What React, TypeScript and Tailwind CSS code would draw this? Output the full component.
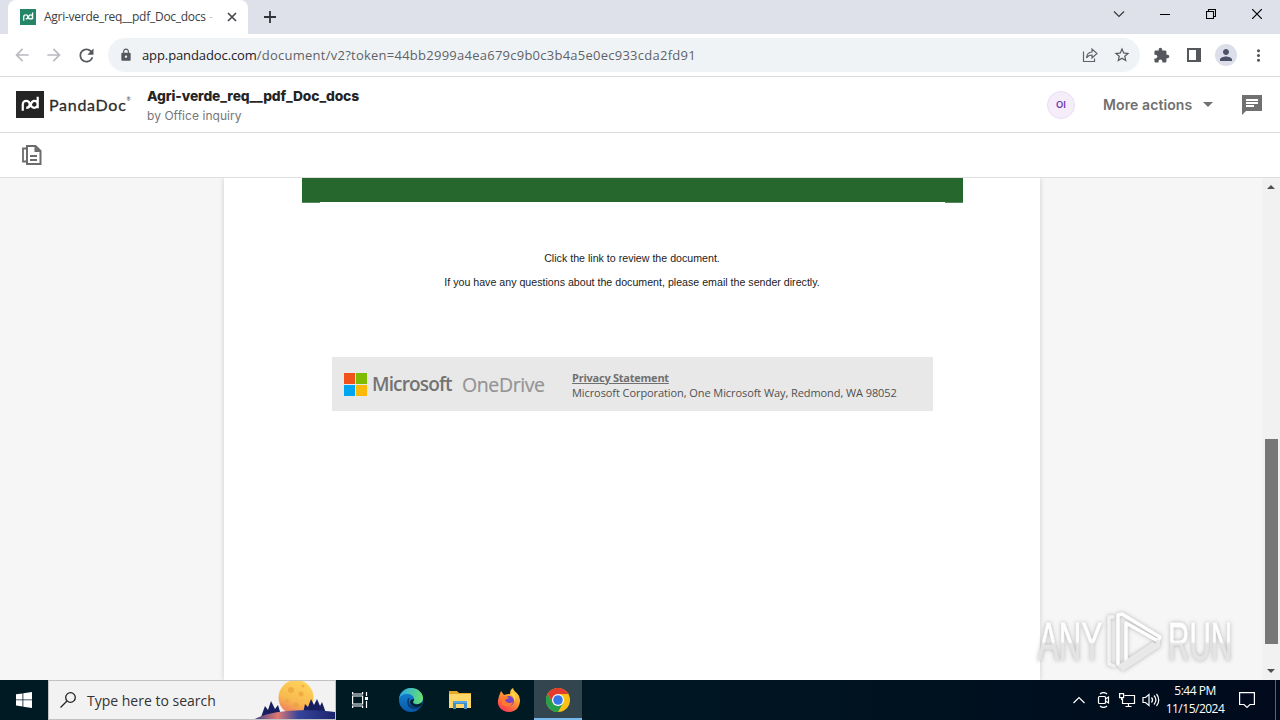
import React from "react";
import { MdLock, MdStarBorder, MdExtension, MdPerson, MdMoreVert, MdArrowBack, MdArrowForward, MdRefresh } from "react-icons/md";

function PdMark({ className }: { className: string }) {
  return (
    <svg viewBox="0 0 28 28" className={className} fill="none" stroke="#fff" strokeWidth="2.3">
      <path d="M6.500 20.500v-6.700a3.600 3.600 0 1 1 3.600 3.600c2.500 0 3.900-1.500 4.700-3.600.8-2.100 2-3.600 3.600-3.600a3.600 3.600 0 1 1-3.600 3.600M22 6V17.800" />
    </svg>
  );
}

function TabStrip() {
  return (
    <div className="flex h-[34px] shrink-0 bg-[#dee1e9]">
      <div className="ml-2 flex h-[34px] w-[240px] items-center rounded-t-lg bg-white pl-3">
        <PdMark className="size-4 shrink-0 bg-[#248567]" />
        <div className="ml-2 w-[173px] text-[12px] whitespace-nowrap text-[#3c4043]">
          <span className="tracking-[-0.270px]">Agri-verde_req__pdf_Doc_docs</span> <span className="text-[#c4c6c9]">-</span>
        </div>
        <svg viewBox="0 0 10 10" className="ml-[10px] size-[10px] shrink-0" stroke="#45494d" strokeWidth="1.7">
          <path d="M1 1l8 8M9 1l-8 8" />
        </svg>
      </div>
      <svg viewBox="0 0 12 12" className="mt-[11px] ml-4 size-3" stroke="#303439" strokeWidth="1.8">
        <path d="M6 0v12M0 6h12" />
      </svg>
      <div className="ml-auto flex h-[28px] items-center pr-[18px] text-black">
        <svg viewBox="0 0 12 12" className="mr-[35px] size-3" fill="none" stroke="#333" strokeWidth="1.1">
          <path d="M1 3.500l5 5 5-5" />
        </svg>
        <svg viewBox="0 0 10 10" className="mr-9 size-[10px]" stroke="#000" strokeWidth="1">
          <path d="M0 5.500h10" />
        </svg>
        <svg viewBox="0 0 10 10" className="mr-9 size-[10px]" fill="none" stroke="#000" strokeWidth="1.100">
          <path d="M.5 2.500h7v7h-7zM2.500 2.500v-2h7v7h-2" />
        </svg>
        <svg viewBox="0 0 10 10" className="size-[10px]" stroke="#000" strokeWidth="1.200">
          <path d="M0 0l10 10M10 0L0 10" />
        </svg>
      </div>
    </div>
  );
}

function AddressBar() {
  return (
    <div className="flex h-[43px] shrink-0 items-center border-b border-[#d8dadd] bg-white pl-3 text-[#54585d]">
      <MdArrowBack className="size-5 text-[#b9bbbe]" />
      <MdArrowForward className="ml-3 size-5 text-[#b9bbbe]" />
      <MdRefresh className="ml-3 size-[21px]" />
      <div className="ml-[11px] flex h-[34px] w-[1032px] items-center rounded-full bg-[#f0f3f6] pl-[11px]">
        <MdLock className="size-[14px]" />
        <div className="ml-[9px] pt-px text-[13px] whitespace-nowrap">
          <span className="tracking-[-0.100px] text-[#202124]">app.pandadoc.com</span>
          <span className="tracking-[0.250px] text-[#5f6368]">/document/v2?token=44bb2999a4ea679c9b0c3b4a5e0ec933cda2fd91</span>
        </div>
        <svg viewBox="0 0 16 16" className="mr-[15px] ml-auto size-4" fill="none" stroke="#5f6368" strokeWidth="1.200">
          <path d="M1.500 4.500v10h11v-3M4.500 11c.3-4 2.500-5.800 5.500-6V2l5 4.500-5 4.500V8c-2.500 0-4.200.9-5.500 3z" />
        </svg>
        <MdStarBorder className="mr-[9px] size-[18px]" />
      </div>
      <MdExtension className="ml-[13px] size-[17px]" />
      <svg viewBox="0 0 14 14" className="ml-[17px] size-[14px]">
        <path d="M1 1h12v12H1z" fill="none" stroke="#54585d" strokeWidth="2" />
        <path d="M9 0h5v14H9z" fill="#54585d" />
      </svg>
      <div className="ml-[14px] flex size-[22px] items-center justify-center rounded-full bg-[#dcdfe9]">
        <MdPerson className="size-[18px] text-[#4b5166]" />
      </div>
      <MdMoreVert className="ml-3 size-[19px]" />
    </div>
  );
}

function DocumentHeader() {
  return (
    <div className="flex h-[56px] shrink-0 items-center border-b border-[#dcdcdc] bg-white pl-4">
      <PdMark className="-mt-px h-[27px] w-7 bg-[#242424]" />
      <div className="ml-[5px] flex w-[82px] items-start text-[16px] leading-none tracking-[0.720px] whitespace-nowrap text-[#2c2c2c] [-webkit-text-stroke:0.300px_#2c2c2c] [font-family:Lato,sans-serif]">
        PandaDoc<span className="text-[5px] tracking-normal [-webkit-text-stroke:0]">®</span>
      </div>
      <div className="ml-4 pt-[3px] [font-family:Inter,sans-serif]">
        <div className="h-[19px] text-[13.800px] leading-[19px] font-extrabold tracking-[-0.100px] whitespace-nowrap text-[#242424]">Agri-verde_req__pdf_Doc_docs</div>
        <div className="h-[19px] text-[12px] leading-[19px] tracking-[0.050px] text-[#767676]">by Office inquiry</div>
      </div>
      <div className="ml-auto flex size-7 items-center justify-center rounded-full border border-[#e8def3] bg-[#f5edfa] pt-[2px] text-[9.500px] font-semibold text-[#7134ad] [font-family:Inter,sans-serif]">OI</div>
      <div className="ml-7 w-[91px] text-[14px] font-semibold tracking-[0.100px] whitespace-nowrap text-[#707070] [font-family:Inter,sans-serif]">More actions</div>
      <svg viewBox="0 0 10 5" className="ml-[9px] h-[5px] w-[10px]" fill="#707070">
        <path d="M0 0h10L5 5z" />
      </svg>
      <svg viewBox="2 2 20 20" className="mr-[18px] ml-[29px] size-5" fill="#707070">
        <path d="M22 2H2v20l4-4h16V2zM6 9h12v2H6V9zm8 5H6v-2h8v2zm4-6H6V6h12v2z" />
      </svg>
    </div>
  );
}

function DocumentToolbar() {
  return (
    <div className="flex h-[45px] shrink-0 items-center border-b border-[#dfdfdf] bg-white pl-[22px]">
      <svg viewBox="0 0 20 20" className="size-5" fill="none" stroke="#6c6c6c">
        <path d="M5 1h8.500l5 5V19H5z" strokeWidth="2" />
        <path d="M5 3.500H1v13h4" strokeWidth="1.800" />
        <path d="M8 11h7M8 15h7" strokeWidth="2" />
        <path d="M12.500 1l6 6h-6z" fill="#6c6c6c" stroke="none" />
      </svg>
    </div>
  );
}

function Watermark() {
  return (
    <div className="absolute top-[432px] left-[1038px] flex h-[62px] w-[198px] items-center opacity-90 [filter:drop-shadow(0_0_2px_#aaaaaa)]">
      <div className="w-[66px]">
        <div className="w-fit origin-left scale-x-[0.590] bg-gradient-to-b from-white from-50% to-[#e3e3e3] to-55% bg-clip-text text-[53px] leading-none text-transparent [-webkit-text-stroke:1px_transparent] [font-family:'Liberation_Sans',sans-serif]">ANY</div>
      </div>
      <svg viewBox="0 0 60 64" className="h-[64px] w-[60px] shrink-0" fill="none" strokeLinejoin="round" strokeLinecap="round">
        <path d="M13 57L18 59l38-21v-7L30 48z" fill="#e6e6e6" />
        <path d="M9 8H5v47l5 2" stroke="#f2f2f2" strokeWidth="3.500" />
        <path d="M14 55V6l4-1 38 23-2 4L22 14v37" stroke="#fff" strokeWidth="3.500" />
        <path d="M54 32v5L19 60l-3-3 33-22" stroke="#e8e8e8" strokeWidth="3.500" />
      </svg>
      <div className="ml-1 w-[64px]">
        <div className="w-fit origin-left scale-x-[0.560] bg-gradient-to-b from-white from-50% to-[#e3e3e3] to-55% bg-clip-text text-[53px] leading-none text-transparent [-webkit-text-stroke:1px_transparent] [font-family:'Liberation_Sans',sans-serif]">RUN</div>
      </div>
    </div>
  );
}

function DocumentView() {
  return (
    <div className="relative flex h-[502px] shrink-0 overflow-hidden bg-[#f6f6f6]">
      <div className="ml-[224px] w-[816px] bg-white shadow-[0_0_5px_#cccccc]">
        <div className="ml-[78px] h-6 w-[661px] bg-[#25672d]" />
        <div className="ml-[78px] flex h-px w-[661px] justify-between">
          <div className="h-px w-[18px] bg-[#588a5e]" />
          <div className="h-px w-[18px] bg-[#588a5e]" />
        </div>
        <div className="mt-[43px] text-center text-[10.650px] leading-6 text-[#222] [font-family:'Liberation_Sans',sans-serif]">
          <p>Click the link to review the document.</p>
          <p>If you have any questions about the document, please email the sender directly.</p>
        </div>
        <div className="mt-[63px] ml-[108px] flex h-[54px] w-[601px] items-center bg-[#e8e8e8]">
          <div className="ml-3 grid size-[23px] grid-cols-2 gap-px">
            <div className="bg-[#f1511b]" />
            <div className="bg-[#80bb03]" />
            <div className="bg-[#00a4ef]" />
            <div className="bg-[#fbb90a]" />
          </div>
          <div className="ml-[5px] w-[90px] pt-px text-[19px] font-semibold tracking-[-0.850px] whitespace-nowrap text-[#737373]">Microsoft</div>
          <div className="w-[110px] pt-px text-[19.500px] tracking-[-0.400px] whitespace-nowrap text-[#949494] [-webkit-text-stroke:0.200px_#949494]">OneDrive</div>
          <div className="pt-px text-[11px] leading-[15px] whitespace-nowrap text-[#505050]">
            <div className="font-bold tracking-[-0.240px] text-[#707070] underline">Privacy Statement</div>
            <div className="tracking-[-0.080px]">Microsoft Corporation, One Microsoft Way, Redmond, WA 98052</div>
          </div>
        </div>
      </div>
      <div className="ml-auto flex w-[18px] flex-col items-center bg-[#f1f1f1]">
        <svg viewBox="0 0 8 4" className="mt-[7px] h-1 w-2" fill="#505050"><path d="M4 0l4 4H0z" /></svg>
        <div className="mt-[250px] ml-px h-[205px] w-[13px] bg-[#777777]" />
        <svg viewBox="0 0 8 4" className="mt-[25px] h-1 w-2" fill="#505050"><path d="M0 0h8L4 4z" /></svg>
      </div>
      <Watermark />
    </div>
  );
}

function MoonScene() {
  return (
    <svg viewBox="0 0 82 38" className="ml-auto h-[38px] w-[82px]">
      <defs>
        <linearGradient id="moon" x1="0.700" y1="0" x2="0.300" y2="1">
          <stop offset="0" stopColor="#ffd45a" />
          <stop offset="0.600" stopColor="#f8b950" />
          <stop offset="1" stopColor="#ee765e" />
        </linearGradient>
        <linearGradient id="hill">
          <stop offset="0" stopColor="#33398a" />
          <stop offset="0.300" stopColor="#e07973" />
          <stop offset="0.550" stopColor="#37449c" />
          <stop offset="1" stopColor="#1b246d" />
        </linearGradient>
      </defs>
      <circle cx="43" cy="16.500" r="17.500" fill="url(#moon)" />
      <g fill="#e9a43c" opacity="0.700">
        <circle cx="38" cy="9" r="3" /><circle cx="48" cy="13" r="2.500" />
        <circle cx="34" cy="20" r="2" /><circle cx="43" cy="24" r="2.500" /><circle cx="50" cy="5" r="1.500" />
      </g>
      <path d="M8 36l4-11 3 4 3-9 4 8 3-4 3 10zM50 32l2-9 3 3 3-8 3 6 3-6 3 7 2-4 4 11z" fill="#171f61" />
      <path d="M0 39c8-5 22-8 34-9 14-1 34-1 48 1v8z" fill="url(#hill)" />
    </svg>
  );
}

function EdgeIcon() {
  return (
    <svg viewBox="0 0 24 24" className="size-6">
      <defs>
        <linearGradient id="edgeTop" x1="0" y1="0.400" x2="1" y2="0.500"><stop stopColor="#28a8e8" /><stop offset="1" stopColor="#68e070" /></linearGradient>
        <linearGradient id="edgeLow" x2="0" y2="1"><stop stopColor="#1687d8" /><stop offset="1" stopColor="#0959a8" /></linearGradient>
      </defs>
      <circle cx="12" cy="12" r="12" fill="url(#edgeLow)" />
      <path d="M0 11C1 4 6 0 12 0c7 0 12 5 12 10 0 4-3 6-6 6-3 0-4-1-4-2 0-1 1-1 1-3 0-3-3-5-7-5-4 0-7 2-8 5z" fill="url(#edgeTop)" />
      <path d="M9 10c-3 7 2 12 8 11 2 0 4-1 5-3-4 2-11 1-12-4-.300-2 .5-3 1-3.500z" fill="#063d79" />
      <path d="M15 11c0 2-1 2-1 3 0 2 3 3 6 2l4-2-2 4c-4 2-10 1-11-4 0-2 2-3 4-3z" fill="#03202e" />
    </svg>
  );
}

function ExplorerIcon() {
  return (
    <svg viewBox="0 0 22 20" className="h-5 w-[22px]">
      <path d="M0 1h8l2 2h12v15H0z" fill="#e8a928" />
      <path d="M0 4h22v14H0z" fill="#ffd668" />
      <path d="M4 11h14v8h-3v-5H7v5H4z" fill="#3e8fcc" />
      <path d="M4 11h14v2H4z" fill="#54aae0" />
    </svg>
  );
}

function FirefoxIcon() {
  return (
    <svg viewBox="0 0 24 24" className="size-6">
      <defs><linearGradient id="fox" x1="0.800" y1="0" x2="0.200" y2="1"><stop stopColor="#ffe34a" /><stop offset="0.450" stopColor="#ff9530" /><stop offset="1" stopColor="#f82f57" /></linearGradient></defs>
      <path d="M2 8l2-5 3 4c2-1 4-1 6-1 0-3 1-5 3-6 1 4 4 4 6 8l1 4c0 7-4 12-11 12C4 24 0 18 1 12z" fill="url(#fox)" />
      <circle cx="12" cy="13" r="5" fill="#7544c9" />
      <path d="M5 8c3 0 5 0 7 2l-4 2c1 3 5 4 8 2-1 5-8 6-11 2z" fill="#ff7b2d" />
      <path d="M13 6c3 1 5 4 4 8 2-3 2-7-1-9z" fill="#ffdc45" />
    </svg>
  );
}

function ChromeIcon() {
  return (
    <svg viewBox="0 0 24 24" className="size-6">
      <circle cx="12" cy="12" r="12" fill="#fbc116" />
      <path d="M1.600 6A12 12 0 0 1 22.400 6H12L6.800 15z" fill="#e33b2e" />
      <path d="M1.600 6l5.200 9L12 18l5.200-3L12 24A12 12 0 0 1 1.600 6z" fill="#269f4d" />
      <circle cx="12" cy="12" r="6" fill="#fff" /><circle cx="12" cy="12" r="4.800" fill="#3478e5" />
    </svg>
  );
}

function Taskbar() {
  return (
    <div className="flex h-10 shrink-0 items-center bg-gradient-to-r from-[#001a24] from-40% to-[#000a1c] text-white">
      <div className="flex w-12 justify-center">
        <svg viewBox="0 0 16 16" className="size-4" fill="#fff"><path d="M0 2.300L6.500 1.400v6.100H0zM7.300 1.300L16 0v7.500H7.300zM0 8.300h6.500v6.200L0 13.600zM7.300 8.300H16V16l-8.700-1.300z" /></svg>
      </div>
      <div className="flex h-10 w-[288px] items-center border border-[#bfc1c2] bg-[#f2f2f2]">
        <svg viewBox="0 0 16 16" className="ml-[11px] size-4" fill="none" stroke="#222" strokeWidth="1.300"><circle cx="10.500" cy="5.500" r="4.800" /><path d="M7 9L.5 15.500" /></svg>
        <div className="ml-[11px] text-[14px] whitespace-nowrap text-[#333]">Type here to search</div>
        <MoonScene />
      </div>
      <div className="flex w-12 justify-center">
        <svg viewBox="0 0 17 16" className="h-4 w-[17px]" fill="none" stroke="#fff" strokeWidth="1.200"><path d="M.6 4h10v8H.6zM.6 0v2h10V0M.6 16v-2h10v2M14.500 0v4M14.500 9v7" /><path d="M13 5h3v3h-3z" fill="#fff" stroke="none" /></svg>
      </div>
      <div className="flex w-[54px] justify-center"><EdgeIcon /></div>
      <div className="flex w-[44px] justify-center"><ExplorerIcon /></div>
      <div className="flex w-[52px] justify-center pl-[2px]"><FirefoxIcon /></div>
      <div className="flex h-10 w-12 items-center justify-center border-b-2 border-[#76b9ed] bg-[#33454e] pt-[2px]"><ChromeIcon /></div>
      <div className="ml-auto flex items-center">
        <svg viewBox="0 0 12 8" className="h-2 w-3" fill="none" stroke="#fff" strokeWidth="1.200"><path d="M.5 7L6 1.500 11.500 7" /></svg>
        <svg viewBox="0 0 14 16" className="ml-3 h-4 w-[14px]" fill="none" stroke="#fff" strokeWidth="1.200"><rect x="1.500" y="4.500" width="7" height="7" rx="1" /><path d="M8.500 7l3-2v6l-3-2M3 2c2-1.700 5-1.700 7 0M3 14c2 1.700 5 1.700 7 0" /></svg>
        <svg viewBox="0 0 17 16" className="ml-[8px] h-4 w-[17px]" fill="none" stroke="#fff" strokeWidth="1.200"><path d="M5.500 3.500h10v8H3.500v-5M9.500 11.500v3M6.500 14.500h6M.6 1.600h4v4h-4zM2.600 5.600V8" /></svg>
        <svg viewBox="0 0 18 16" className="ml-[6px] h-4 w-[18px]" fill="none" stroke="#fff" strokeWidth="1.200"><path d="M1 5.500h2.500L7 2.500v11l-3.500-3H1zM9.500 5.500c1.300 1.500 1.300 3.500 0 5M12 3.500c2.300 2.700 2.300 6.300 0 9M14.500 2c3 3.500 3 8.500 0 12" /></svg>
        <div className="ml-[2px] w-[66px] text-center text-[12px] leading-[18px] tracking-[-0.500px] whitespace-nowrap"><div>5:44 PM</div><div>11/15/2024</div></div>
        <svg viewBox="0 0 16 16" className="ml-[11px] size-4" fill="none" stroke="#fff" strokeWidth="1.200"><path d="M.6.6h14.800v11.900H11L8 15.400l-3-2.900H.6z" /></svg>
        <div className="mr-1 ml-5 h-10 w-px bg-[#5d6470]" />
      </div>
    </div>
  );
}

export default function App() {
  return (
    <div className="flex h-[720px] w-[1280px] flex-col overflow-hidden bg-white [font-family:'Open_Sans','Noto_Sans',sans-serif]">
      <TabStrip />
      <AddressBar />
      <DocumentHeader />
      <DocumentToolbar />
      <DocumentView />
      <Taskbar />
    </div>
  );
}
